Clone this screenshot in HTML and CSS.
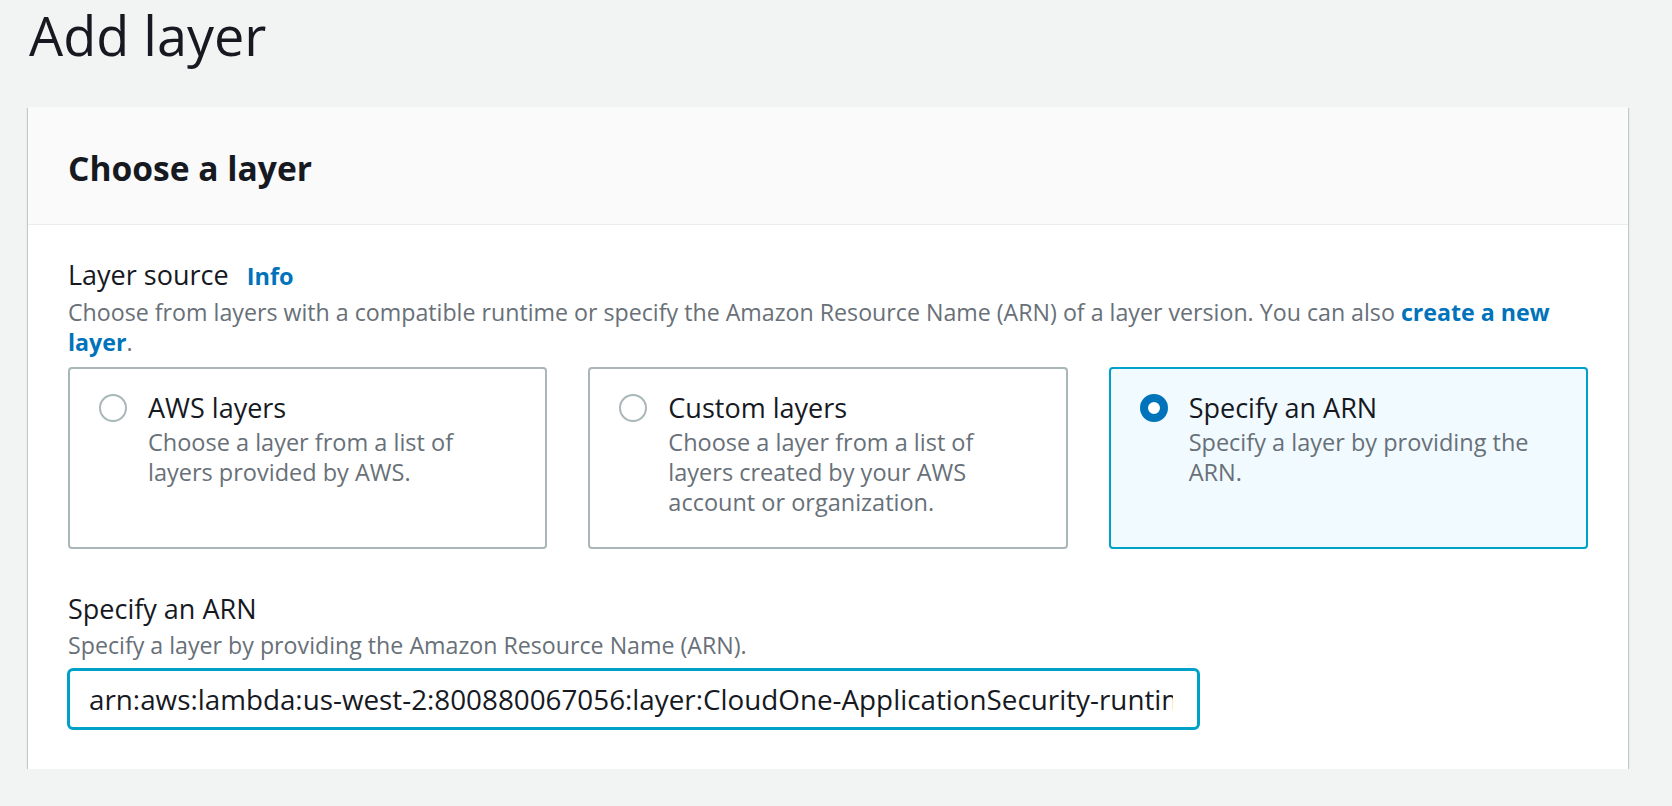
FILE: index.html
```html
<!DOCTYPE html>
<html lang="en">
<head>
<meta charset="utf-8">
<title>Add layer</title>
<link rel="stylesheet" href="styles.css">
</head>
<body>
<main class="page">
  <h1 class="page-title">Add layer</h1>
  <section class="panel">
    <header class="panel-header">
      <h2 class="panel-title">Choose a layer</h2>
    </header>
    <div class="panel-body">
      <div class="field">
        <div class="field-label">Layer source <a class="info-link" href="#">Info</a></div>
        <p class="field-desc">Choose from layers with a compatible runtime or specify the Amazon Resource Name (ARN) of a layer version. You can also <a class="desc-link" href="#">create a new layer</a>.</p>
        <div class="tiles">
          <label class="tile">
            <span class="radio"></span>
            <span class="tile-text">
              <span class="tile-title">AWS layers</span>
              <span class="tile-desc">Choose a layer from a list of layers provided by AWS.</span>
            </span>
          </label>
          <label class="tile">
            <span class="radio"></span>
            <span class="tile-text">
              <span class="tile-title">Custom layers</span>
              <span class="tile-desc">Choose a layer from a list of layers created by your AWS account or organization.</span>
            </span>
          </label>
          <label class="tile tile-selected">
            <span class="radio radio-checked"></span>
            <span class="tile-text">
              <span class="tile-title">Specify an ARN</span>
              <span class="tile-desc">Specify a layer by providing the ARN.</span>
            </span>
          </label>
        </div>
      </div>
      <div class="field field-arn">
        <div class="field-label">Specify an ARN</div>
        <p class="field-desc">Specify a layer by providing the Amazon Resource Name (ARN).</p>
        <input class="text-input" type="text" value="arn:aws:lambda:us-west-2:800880067056:layer:CloudOne-ApplicationSecurity-runtime-python3_8:1">
      </div>
    </div>
  </section>
</main>
</body>
</html>
```

FILE: styles.css
```css
* { box-sizing: border-box; }

html, body {
  margin: 0;
  padding: 0;
  background: #f2f3f3;
}

body {
  font-family: "Open Sans", "Noto Sans", sans-serif;
  color: #16191f;
}

.page {
  padding: 3px 44px 0 28px;
}

.page-title {
  margin: 0 0 40px 1px;
  font-size: 54px;
  line-height: 64px;
  font-weight: 400;
  color: #16191f;
}

.panel {
  width: 1600px;
  background: #ffffff;
  box-shadow: 0 1px 1px 0 rgba(0, 28, 36, 0.3), 1px 1px 1px 0 rgba(0, 28, 36, 0.15), -1px 1px 1px 0 rgba(0, 28, 36, 0.15);
}

.panel-header {
  background: #fafafa;
  border-bottom: 1px solid #eaeded;
  padding: 41px 40px 36px;
}

.panel-title {
  margin: 0;
  font-size: 33.6px;
  line-height: 40px;
  font-weight: 700;
  color: #16191f;
}

.panel-body {
  padding: 34px 40px 39px;
}

.field-label {
  font-size: 27px;
  line-height: 32px;
  color: #16191f;
}

.info-link {
  margin-left: 11px;
  font-size: 23.5px;
  font-weight: 700;
  color: #0073bb;
  text-decoration: none;
}

.field-desc {
  margin: 5px 0 0;
  font-size: 23.2px;
  line-height: 30px;
  color: #687078;
}

.desc-link {
  font-weight: 700;
  color: #0073bb;
  text-decoration: none;
}

.tiles {
  display: grid;
  grid-template-columns: repeat(3, 1fr);
  column-gap: 41px;
  margin-top: 10px;
}

.tile {
  display: flex;
  align-items: flex-start;
  gap: 21px;
  height: 182px;
  padding: 22px 40px 0 29px;
  border: 2px solid #aab7b8;
  border-radius: 4px;
  background: #ffffff;
}

.tile-selected {
  border-color: #00a1c9;
  background: #f1faff;
}

.radio {
  flex: 0 0 28px;
  width: 28px;
  height: 28px;
  margin-top: 3px;
  border: 2px solid #aab7b8;
  border-radius: 50%;
  background: #ffffff;
}

.radio-checked {
  border: 8.5px solid #0073bb;
  background: #ffffff;
}

.tile-text {
  display: flex;
  flex-direction: column;
}

.tile-title {
  font-size: 27px;
  line-height: 34px;
  color: #16191f;
}

.tile-desc {
  margin-top: 2px;
  font-size: 23.5px;
  line-height: 30px;
  color: #687078;
}

.field-arn {
  margin-top: 44px;
}

.text-input {
  display: block;
  width: 1133px;
  height: 62px;
  margin: 8px 0 0 -1px;
  padding: 0 24px 0 19px;
  border: 3px solid #00a1c9;
  border-radius: 6px;
  background: #ffffff;
  font-family: "Open Sans", "Noto Sans", sans-serif;
  font-size: 27.8px;
  color: #16191f;
  outline: none;
}
```
